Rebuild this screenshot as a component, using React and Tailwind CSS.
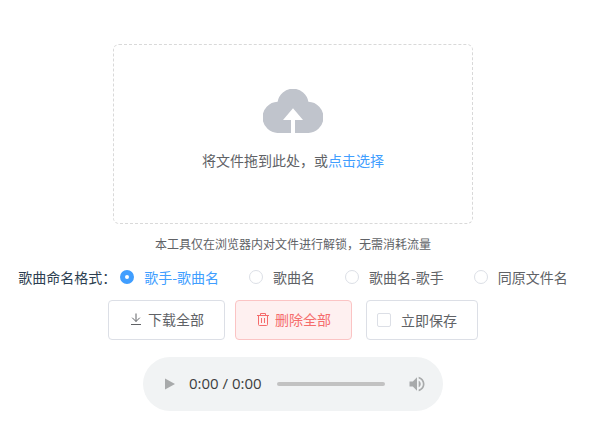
import React, { useState } from "react";

const formats = [
  { key: "1", label: "歌手-歌曲名" },
  { key: "2", label: "歌曲名" },
  { key: "3", label: "歌曲名-歌手" },
  { key: "4", label: "同原文件名" },
];

const CloudIcon = () => (
  <svg width="60" height="44" viewBox="0 0 60 44" fill="#c0c4cc">
    <path d="M15.7 44A15.6 15.6 0 0 1 14.6 12.8A15.6 15.6 0 0 1 45.4 12.8A15.6 15.6 0 0 1 44.3 44H32V31H40L30 19.2L20 31H28V44Z" />
  </svg>
);

const DownloadIcon = () => (
  <svg
    width="14"
    height="14"
    viewBox="0 0 14 14"
    fill="none"
    stroke="currentColor"
    strokeWidth="1"
  >
    <path d="M7 1.5V9.5M3.2 5.7L7 9.5L10.8 5.7M2 12.5H12" />
  </svg>
);

const DeleteIcon = () => (
  <svg
    width="14"
    height="14"
    viewBox="0 0 14 14"
    fill="none"
    stroke="currentColor"
    strokeWidth="1"
  >
    <path d="M1 3.5H13M4.5 3.5V1.5H9.5V3.5M2.5 3.5V12.5Q2.5 13.5 3.5 13.5H10.5Q11.5 13.5 11.5 12.5V3.5M5.5 6V11M8.5 6V11" />
  </svg>
);

const Upload = () => (
  <label className="w-full max-w-[360px] h-[180px] flex flex-col items-center border border-dashed border-[#d9d9d9] rounded-md cursor-pointer hover:border-[#409eff]">
    <input type="file" multiple className="sr-only" />
    <div className="mt-11">
      <CloudIcon />
    </div>
    <div className="mt-[17px] text-[#606266]">
      将文件拖到此处，或<em className="not-italic text-[#409eff]">点击选择</em>
    </div>
  </label>
);

const AudioPlayer = () => (
  <div className="w-[300px] h-[54px] mt-[17px] pl-5 pr-4 flex items-center rounded-full bg-[#f1f3f4]">
    <button aria-label="play" className="text-[#a8aaab]">
      <svg width="16" height="16" viewBox="0 0 16 16" fill="currentColor">
        <path d="M2 2.5V13.5L12 8Z" />
      </svg>
    </button>
    <span className="ml-[10px] font-['Open_Sans',sans-serif] text-[15px] text-[#3c3e40]">
      0:00 / 0:00
    </span>
    <input
      type="range"
      aria-label="progress"
      defaultValue="0"
      className="ml-[15px] min-w-0 flex-1 h-1 appearance-none rounded-full bg-[#c2c2c2] [&::-webkit-slider-thumb]:appearance-none [&::-webkit-slider-thumb]:w-0"
    />
    <button aria-label="mute" className="ml-[22px] text-[#a8aaab]">
      <svg width="20" height="20" viewBox="0 0 24 24" fill="currentColor">
        <path d="M3 9v6h4l5 5V4L7 9H3zm13.5 3c0-1.77-1.02-3.29-2.5-4.03v8.05c1.48-.73 2.5-2.25 2.5-4.02zM14 3.23v2.06c2.89.86 5 3.54 5 6.71s-2.11 5.85-5 6.71v2.06c4.01-.91 7-4.49 7-8.77s-2.99-7.86-7-8.77z" />
      </svg>
    </button>
  </div>
);

const App = () => {
  const [format, setFormat] = useState("1");
  const [instantSave, setInstantSave] = useState(false);

  return (
    <main className="pt-11 pr-[14px] pb-4 flex flex-col items-center bg-white font-['Noto_Sans_CJK_SC',sans-serif] text-sm text-[#606266]">
      <Upload />
      <p className="mt-3 text-xs">
        本工具仅在浏览器内对文件进行解锁，无需消耗流量
      </p>

      <div className="mt-[15px] flex items-center whitespace-nowrap">
        <span id="format-label" className="mr-1 text-[#2c3e50]">
          歌曲命名格式：
        </span>
        <div
          role="radiogroup"
          aria-labelledby="format-label"
          className="flex gap-[30px]"
        >
          {formats.map((item) => (
            <label
              key={item.key}
              className="flex items-center gap-[10px] cursor-pointer has-checked:text-[#409eff]"
            >
              <input
                type="radio"
                name="format"
                value={item.key}
                checked={format === item.key}
                onChange={(e) => setFormat(e.target.value)}
                className="size-[14px] appearance-none rounded-full border border-[#dcdfe6] bg-white checked:border-5 checked:border-[#409eff]"
              />
              {item.label}
            </label>
          ))}
        </div>
      </div>

      <div className="mt-[13px] flex items-center">
        <button className="h-10 px-5 pb-0.5 flex items-center gap-[5px] rounded border border-[#dcdfe6] bg-white cursor-pointer">
          <DownloadIcon />
          下载全部
        </button>
        <button className="h-10 ml-[10px] px-5 pb-0.5 flex items-center gap-[5px] rounded border border-[#fbc4c4] bg-[#fef0f0] text-[#f56c6c] cursor-pointer">
          <DeleteIcon />
          删除全部
        </button>
        <label className="h-10 ml-[14px] pl-[10px] pr-5 flex items-center gap-[10px] rounded border border-[#dcdfe6] cursor-pointer">
          <input
            type="checkbox"
            checked={instantSave}
            onChange={(e) => setInstantSave(e.target.checked)}
            className="size-[14px] appearance-none rounded-xs border border-[#dcdfe6] bg-white checked:border-[#409eff] checked:bg-[#409eff]"
          />
          立即保存
        </label>
      </div>

      <AudioPlayer />
    </main>
  );
};

export default App;
